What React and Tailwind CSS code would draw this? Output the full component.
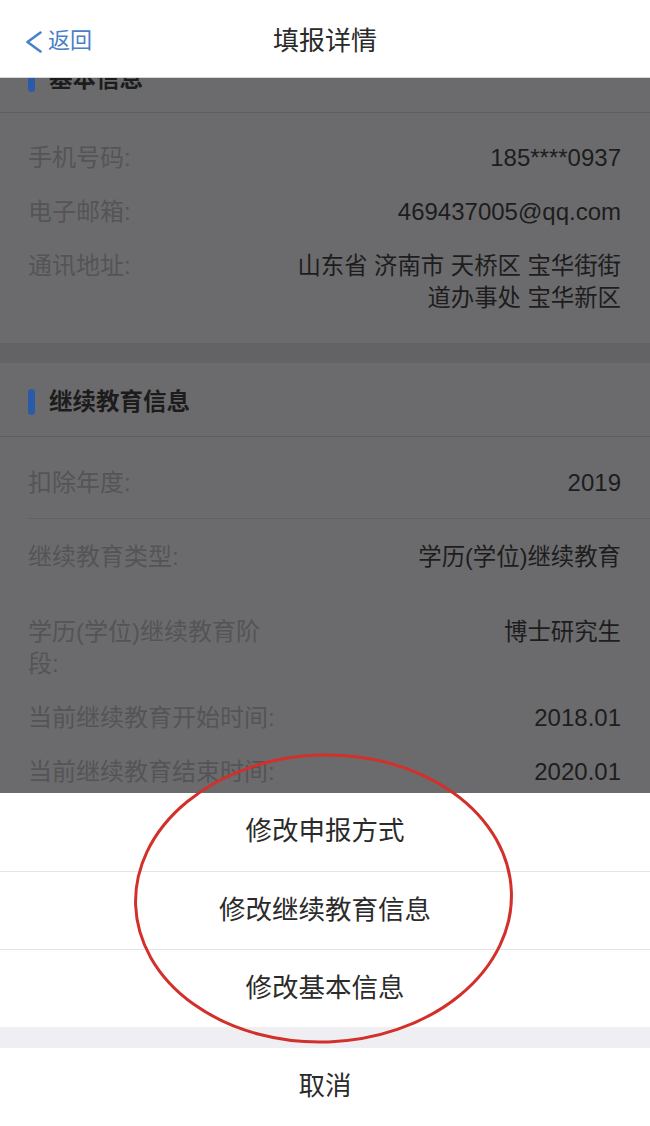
export default function App() {
  const Row = ({ label, value, className = "", latin = false }) => (
    <div className={`flex justify-between items-start px-[28px] pr-[29px] leading-[32px] ${className}`}>
      <div className="text-[#545456] text-[24px]">{label}</div>
      <div className={`text-[#1d1d1d] text-right ${latin ? "text-[24px]" : "text-[23.4px]"}`}>{value}</div>
    </div>
  );

  return (
    <div className="relative h-[1126px] w-full overflow-hidden bg-[#6b6b6d] flex flex-col font-['Liberation_Sans','Noto_Sans_CJK_SC',sans-serif]">
      {/* Nav bar */}
      <header className="relative z-10 h-[78px] shrink-0 bg-white border-b border-[#d6d6d8] grid grid-cols-[1fr_auto_1fr] items-center pt-[4px] px-[25px]">
        <div className="flex items-center gap-[5px] text-[#4a80c6]">
          <svg width="18" height="22" viewBox="0 0 18 22" className="mt-[3px]">
            <path d="M15.5 1.5 L2.5 11 L15.5 20.5" stroke="currentColor" strokeWidth="2.6" fill="none" strokeLinecap="round" strokeLinejoin="round" />
          </svg>
          <span className="text-[22px] leading-[30px]">返回</span>
        </div>
        <h1 className="text-[26px] leading-[34px] text-[#2a2a2a] font-normal">填报详情</h1>
        <div />
      </header>

      {/* Scrolled content (dimmed) */}
      <main className="-mt-[38px] flex flex-col">
        {/* 基本信息 */}
        <section className="bg-[#6b6b6d]">
          <div className="h-[73px] flex items-end pb-[17px] pl-[28px] border-b border-[#5f5f61]">
            <div className="flex items-center gap-[14px]">
              <div className="w-[7px] h-[26px] rounded-full bg-[#2a5ba8]" />
              <div className="text-[23.5px] leading-[32px] font-semibold text-[#1c1c1c]">基本信息</div>
            </div>
          </div>
          <div className="pt-[18px] pb-[18px]">
            <Row className="py-[11px]" latin label="手机号码:" value="185****0937" />
            <Row className="py-[11px]" latin label="电子邮箱:" value="469437005@qq.com" />
            <Row
              className="py-[11px]"
              label="通讯地址:"
              value={
                <>
                  <span className="block">山东省 济南市 天桥区 宝华街街</span>
                  <span className="block">道办事处 宝华新区</span>
                </>
              }
            />
          </div>
        </section>

        <div className="h-[20px] bg-[#636365]" />

        {/* 继续教育信息 */}
        <section className="bg-[#6b6b6d]">
          <div className="h-[74px] flex items-center pt-[4px] pl-[28px] border-b border-[#5f5f61]">
            <div className="flex items-center gap-[14px]">
              <div className="w-[7px] h-[26px] rounded-full bg-[#2a5ba8]" />
              <div className="text-[23.5px] leading-[32px] font-semibold text-[#1c1c1c]">继续教育信息</div>
            </div>
          </div>
          <div className="ml-[28px] border-b border-[#626264]">
            <Row className="pl-0 pt-[30px] pb-[19px]" latin label="扣除年度:" value="2019" />
          </div>
          <Row className="pt-[22px] pb-[21px]" label="继续教育类型:" value="学历(学位)继续教育" />
          <Row
            className="pt-[22px] pb-[11px]"
            label={
              <>
                <span className="block">学历(学位)继续教育阶</span>
                <span className="block">段:</span>
              </>
            }
            value="博士研究生"
          />
          <Row className="py-[11px]" latin label="当前继续教育开始时间:" value="2018.01" />
          <Row className="py-[11px]" latin label="当前继续教育结束时间:" value="2020.01" />
          <div className="h-[200px]" />
        </section>
      </main>

      {/* Action sheet */}
      <div className="absolute bottom-0 inset-x-0 z-10 bg-white flex flex-col">
        <button className="h-[78px] flex items-center justify-center text-[26.5px] text-[#2b2b2b]">修改申报方式</button>
        <button className="h-[78px] flex items-center justify-center text-[26.5px] text-[#2b2b2b] border-t border-[#e4e4e6]">修改继续教育信息</button>
        <button className="h-[78px] flex items-center justify-center text-[26.5px] text-[#2b2b2b] border-t border-[#e4e4e6]">修改基本信息</button>
        <div className="h-[21px] bg-[#efeff3]" />
        <button className="h-[78px] flex items-center justify-center text-[26.5px] text-[#2b2b2b]">取消</button>
      </div>

      {/* Red annotation circle */}
      <svg className="absolute inset-0 z-20 pointer-events-none" width="650" height="1126" viewBox="0 0 650 1126">
        <ellipse cx="323.5" cy="898.5" rx="188" ry="143.5" fill="none" stroke="#d2302a" strokeWidth="3" transform="rotate(-2 323.5 898.5)" />
      </svg>
    </div>
  );
}
